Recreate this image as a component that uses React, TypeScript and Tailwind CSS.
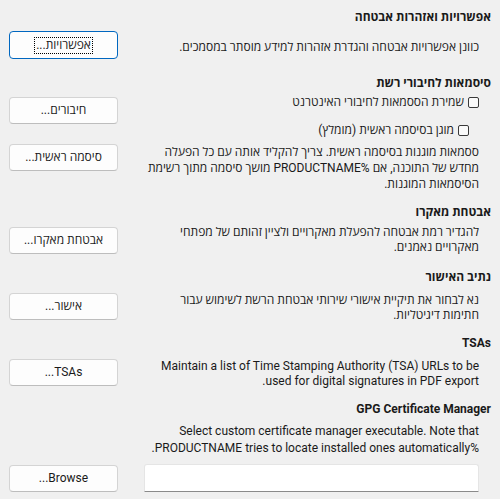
import React from "react";

const Btn = ({ children, focused = false, className = "" }: { children: React.ReactNode; focused?: boolean; className?: string }) => (
  <div
    className={
      "w-[109px] h-[27px] shrink-0 rounded-[4px] flex items-center justify-center bg-[#fdfdfd] " +
      (focused
        ? "border border-[#0067c0] "
        : "border border-[#d4d4d4] border-b-[#bdbdbd] ") +
      className
    }
  >
    {focused ? (
      <span className="outline-1 outline-dotted outline-black px-[1px] leading-[15px]">{children}</span>
    ) : (
      <span className="leading-[15px]">{children}</span>
    )}
  </div>
);

const Check = ({ label, indent = false }: { label: string; indent?: boolean }) => (
  <div className={"flex items-center h-[16px] gap-[4px] " + (indent ? "mr-[10px]" : "")}>
    <span className="w-[11px] h-[11px] rounded-[2px] border border-[#3a3a3a] bg-[#fafafa] shrink-0" />
    <span>{label}</span>
  </div>
);

const Heading = ({ children, className = "" }: { children: React.ReactNode; className?: string }) => (
  <div className={"font-bold leading-[16px] h-[16px] " + className}>{children}</div>
);

export default function App() {
  return (
    <div
      dir="rtl"
      className="w-[500px] h-[499px] overflow-hidden bg-[#f0f0f0] text-[#1a1a1a] text-[12px] pt-[9px] pr-[9px] pl-[9px] font-['Roboto','Open_Sans','DejaVu_Sans',sans-serif]"
    >
      {/* Section 1 */}
      <Heading>אפשרויות ואזהרות אבטחה</Heading>
      <div className="flex items-center justify-between mt-[6px] pr-[12px]">
        <div className="w-[335px] leading-[16px] mt-[4px]">כוונן אפשרויות אבטחה והגדרת אזהרות למידע מוסתר במסמכים.</div>
        <Btn focused className="h-[28px]">אפשרויות...</Btn>
      </div>

      {/* Section 2 */}
      <Heading className="mt-[16px]">סיסמאות לחיבורי רשת</Heading>
      <div className="flex items-start justify-between mt-[3px] pr-[12px]">
        <div className="w-[335px] leading-[16px]">
          <Check label="שמירת הססמאות לחיבורי האינטרנט" />
        </div>
        <Btn className="mt-[3px]">חיבורים...</Btn>
      </div>
      <div className="pr-[12px] -mt-[2px]">
        <Check label="מוגן בסיסמה ראשית (מומלץ)" indent />
      </div>
      <div className="flex items-start justify-between mt-[6px] pr-[12px]">
        <div className="w-[335px] leading-[16px]">
          ססמאות מוגנות בסיסמה ראשית. צריך להקליד אותה עם כל הפעלה מחדש של התוכנה, אם %PRODUCTNAME מושך סיסמה מתוך רשימת הסיסמאות המוגנות.
        </div>
        <Btn>סיסמה ראשית...</Btn>
      </div>

      {/* Section 3 */}
      <Heading className="mt-[12px]">אבטחת מאקרו</Heading>
      <div className="flex items-start justify-between mt-[5px] pr-[12px]">
        <div className="w-[335px] leading-[15px]">
          להגדיר רמת אבטחה להפעלת מאקרויים ולציין זהותם של מפתחי מאקרויים נאמנים.
        </div>
        <Btn className="mt-[2px]">אבטחת מאקרו...</Btn>
      </div>

      {/* Section 4 */}
      <Heading className="mt-[14px]">נתיב האישור</Heading>
      <div className="flex items-start justify-between mt-[8px] pr-[12px]">
        <div className="w-[335px] leading-[15px]">
          נא לבחור את תיקיית אישורי שירותי אבטחת הרשת לשימוש עבור חתימות דיגיטליות.
        </div>
        <Btn>אישור...</Btn>
      </div>

      {/* Section 5 */}
      <Heading className="mt-[12px]">TSAs</Heading>
      <div className="flex items-start justify-between mt-[8px] pr-[12px]">
        <div className="w-[335px] leading-[15px]">
          Maintain a list of Time Stamping Authority (TSA) URLs to be used for digital signatures in PDF export.
        </div>
        <Btn>TSAs...</Btn>
      </div>

      {/* Section 6 */}
      <Heading className="mt-[12px]">GPG Certificate Manager</Heading>
      <div className="mt-[6px] pr-[12px] pl-[135px] leading-[17px]">
        <div>Select custom certificate manager executable. Note that</div>
        <div>%PRODUCTNAME tries to locate installed ones automatically.</div>
      </div>
      <div className="flex items-start justify-between mt-[7px] pr-[12px]">
        <div className="w-[335px] h-[28px] bg-white rounded-t-[3px] border border-[#e5e5e5] border-b-[#8a8a8a]" />
        <Btn className="mt-[1px]">Browse...</Btn>
      </div>
    </div>
  );
}
